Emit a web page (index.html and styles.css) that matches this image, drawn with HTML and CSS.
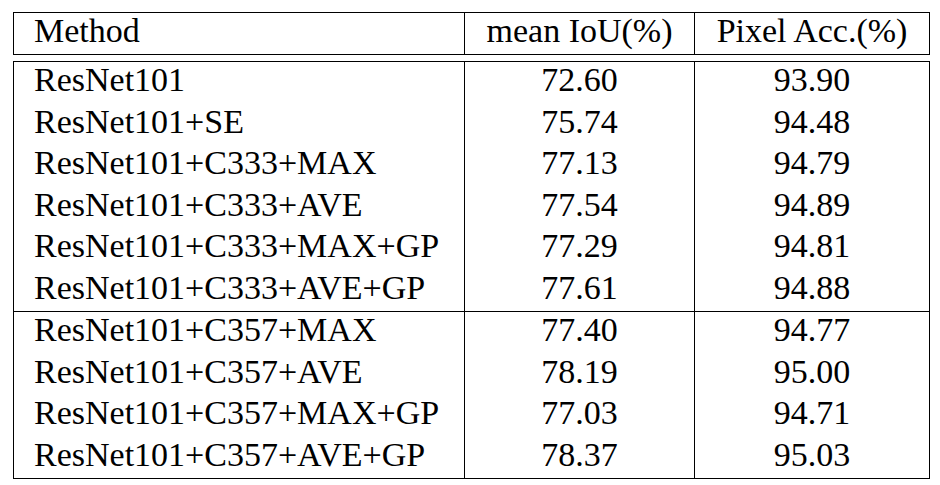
FILE: index.html
```html
<!DOCTYPE html>
<html lang="en">
<head>
    <meta charset="UTF-8">
    <title>Segmentation results</title>
    <link rel="stylesheet" href="styles.css">
</head>
<body>
    <div class="results">
        <!-- header box -->
        <div class="box head">
            <div class="row">
                <div class="cell name">Method</div>
                <div class="cell">mean IoU(%)</div>
                <div class="cell">Pixel Acc.(%)</div>
            </div>
        </div>

        <!-- body box -->
        <div class="box body">
            <div class="group">
                <div class="row"><div class="cell name">ResNet101</div><div class="cell">72.60</div><div class="cell">93.90</div></div>
                <div class="row"><div class="cell name">ResNet101+SE</div><div class="cell">75.74</div><div class="cell">94.48</div></div>
                <div class="row"><div class="cell name">ResNet101+C333+MAX</div><div class="cell">77.13</div><div class="cell">94.79</div></div>
                <div class="row"><div class="cell name">ResNet101+C333+AVE</div><div class="cell">77.54</div><div class="cell">94.89</div></div>
                <div class="row"><div class="cell name">ResNet101+C333+MAX+GP</div><div class="cell">77.29</div><div class="cell">94.81</div></div>
                <div class="row"><div class="cell name">ResNet101+C333+AVE+GP</div><div class="cell">77.61</div><div class="cell">94.88</div></div>
            </div>
            <div class="group second">
                <div class="row"><div class="cell name">ResNet101+C357+MAX</div><div class="cell">77.40</div><div class="cell">94.77</div></div>
                <div class="row"><div class="cell name">ResNet101+C357+AVE</div><div class="cell">78.19</div><div class="cell">95.00</div></div>
                <div class="row"><div class="cell name">ResNet101+C357+MAX+GP</div><div class="cell">77.03</div><div class="cell">94.71</div></div>
                <div class="row"><div class="cell name">ResNet101+C357+AVE+GP</div><div class="cell">78.37</div><div class="cell">95.03</div></div>
            </div>
        </div>
    </div>
</body>
</html>
```

FILE: styles.css
```css
/* base */
* {
    box-sizing: border-box;
    margin: 0;
    padding: 0;
}

body {
    background: #fff;
    color: #000;
    font-family: "Liberation Serif", serif;
    font-size: 34px;
}

/* table frame */
.results {
    width: 917px;
    margin: 12px 0 0 13px;
}

.box {
    border: 1px solid #000;
}

.head .row {
    height: 41px;
}

.body {
    margin-top: 6px;
}

.second {
    border-top: 1px solid #000;
}

/* rows and cells */
.row {
    display: grid;
    grid-template-columns: 450px 230px 1fr;
    height: 41.5px;
}

.cell {
    font-family: "Liberation Serif", serif;
    line-height: 36px;
    text-align: center;
    border-left: 1px solid #000;
    white-space: nowrap;
}

.cell.name {
    text-align: left;
    padding-left: 20px;
    border-left: none;
}
```
